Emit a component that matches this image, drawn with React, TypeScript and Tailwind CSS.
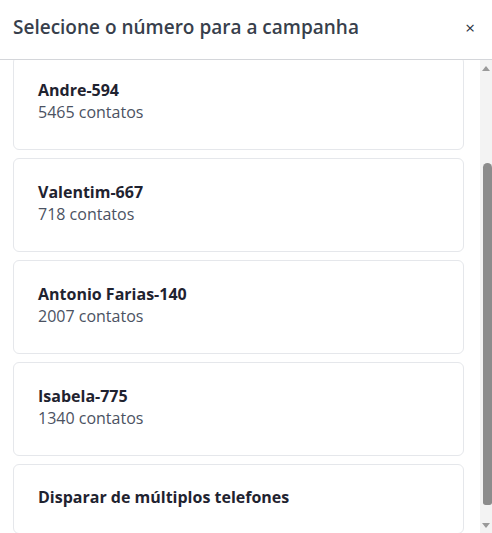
import React, { useEffect, useRef } from 'react';

const numbers = [
  { name: 'Andre-594', contacts: 5465 },
  { name: 'Valentim-667', contacts: 718 },
  { name: 'Antonio Farias-140', contacts: 2007 },
  { name: 'Isabela-775', contacts: 1340 },
];

export default function App() {
  const listRef = useRef<HTMLDivElement>(null);

  useEffect(() => {
    if (listRef.current) listRef.current.scrollTop = 20;
  }, []);

  return (
    <div className="h-screen flex flex-col bg-white font-['Open_Sans',sans-serif]">
      {/* Header */}
      <div className="h-[60px] shrink-0 flex items-center justify-between pl-[13px] pr-[17px] pb-1 border-b border-[#d4d6da]">
        <h2 className="text-[19px] font-semibold text-[#383f4c]">Selecione o número para a campanha</h2>
        <button className="text-[#2b3140] text-[17px] leading-none">×</button>
      </div>

      <div className="flex-1 min-h-0 flex">
        {/* List */}
        <div ref={listRef} className="flex-1 overflow-hidden pl-[13px] pr-[16px] py-4">
          <div className="flex flex-col gap-2">
            {numbers.map((n) => (
              <div key={n.name} className="h-[94px] border border-[#e5e7eb] rounded-md px-6 pb-1 flex flex-col justify-center">
                <div className="text-[16px] font-bold text-[#1f2330] leading-[22px]">{n.name}</div>
                <div className="text-[16px] text-[#4b5262] leading-[22px]">{n.contacts} contatos</div>
              </div>
            ))}
            <div className="h-[70px] border border-[#e5e7eb] rounded-md px-6 pb-1 flex items-center">
              <div className="text-[16px] font-bold text-[#1f2330]">Disparar de múltiplos telefones</div>
            </div>
          </div>
        </div>

        {/* Scrollbar */}
        <div className="w-3 shrink-0 bg-[#f3f3f3] flex flex-col items-center">
          <div className="h-[16px] flex items-center justify-center">
            <div className="w-0 h-0 border-l-[4px] border-r-[4px] border-b-[5px] border-l-transparent border-r-transparent border-b-[#9a9a9a]" />
          </div>
          <div className="h-[87px]" />
          <div className="h-[342px] w-[9px] ml-[3px] rounded-t-[5px] rounded-b-[3px] bg-[#8c8c8c]" />
          <div className="flex-1" />
          <div className="h-[16px] flex items-center justify-center">
            <div className="w-0 h-0 border-l-[4px] border-r-[4px] border-t-[5px] border-l-transparent border-r-transparent border-t-[#9a9a9a]" />
          </div>
        </div>
      </div>
    </div>
  );
}
